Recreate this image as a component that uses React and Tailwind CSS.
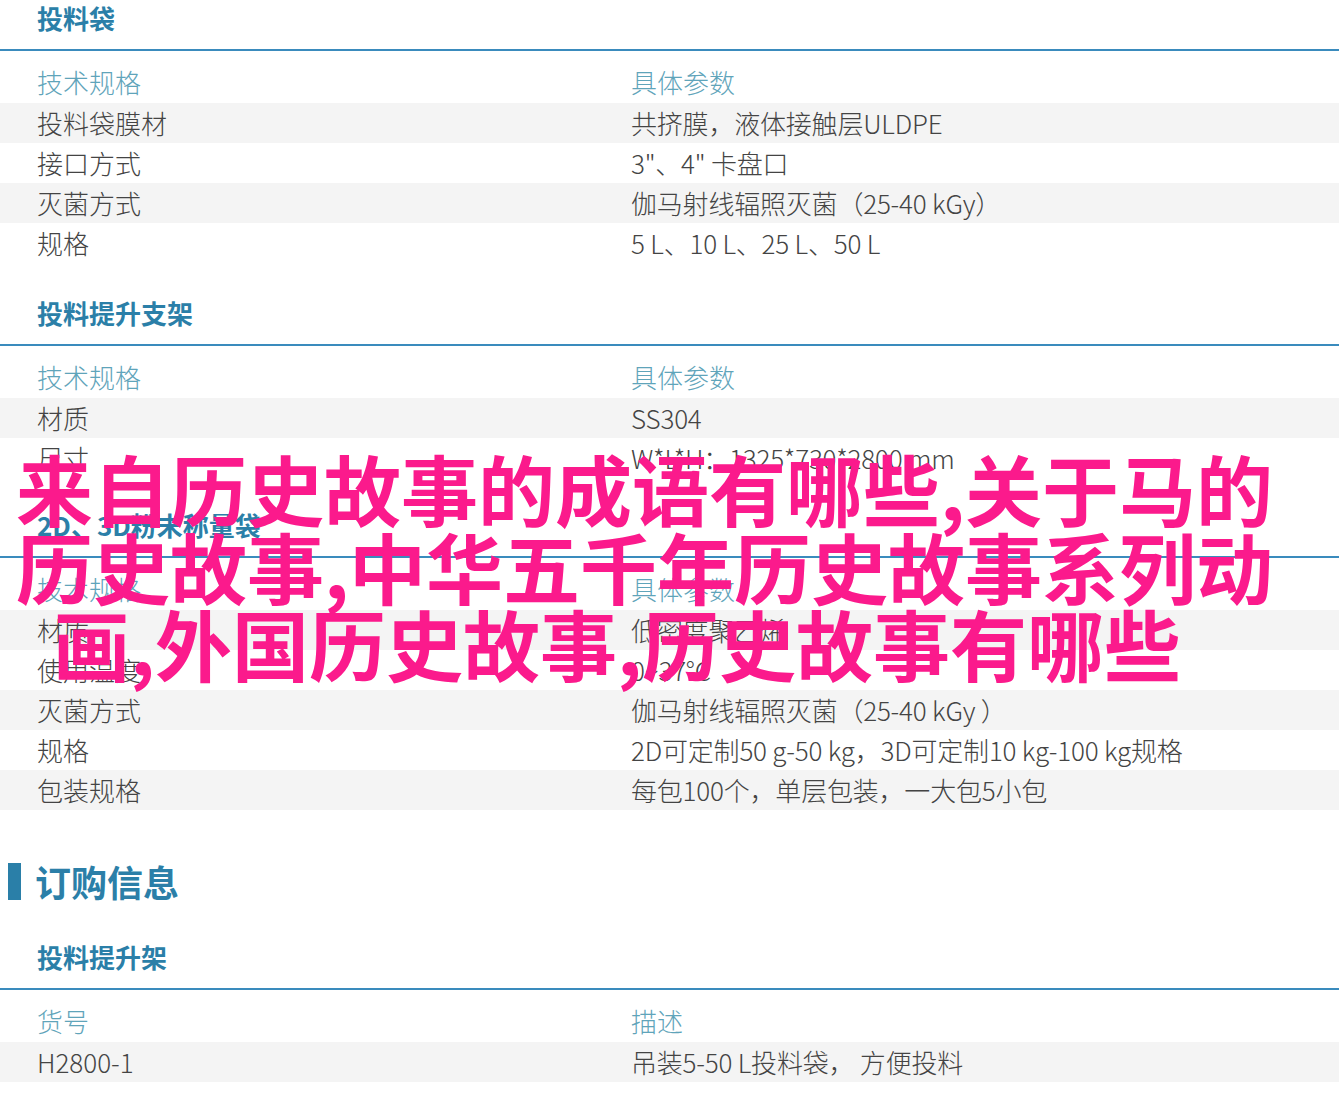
const sections = [
  {
    title: '投料袋',
    mt: 'mt-0',
    head: ['技术规格', '具体参数'],
    rows: [
      ['投料袋膜材', '共挤膜，液体接触层ULDPE'],
      ['接口方式', '3"、4" 卡盘口'],
      ['灭菌方式', '伽马射线辐照灭菌（25-40 kGy）'],
      ['规格', '5 L、10 L、25 L、50 L'],
    ],
  },
  {
    title: '投料提升支架',
    mt: 'mt-[32px]',
    head: ['技术规格', '具体参数'],
    rows: [
      ['材质', 'SS304'],
      ['尺寸', 'W*L*H：1325*730*2800 mm'],
    ],
  },
  {
    title: '2D、3D粉末称量袋',
    mt: 'mt-[29px]',
    head: ['技术规格', '具体参数'],
    rows: [
      ['材质', '低密度聚乙烯'],
      ['使用温度', '0~37°C'],
      ['灭菌方式', '伽马射线辐照灭菌（25-40 kGy ）'],
      ['规格', '2D可定制50 g-50 kg，3D可定制10 kg-100 kg规格'],
      ['包装规格', '每包100个，单层包装，一大包5小包'],
    ],
  },
];

const SpecTable = ({ title, head, rows, mt }) => (
  <div className={mt}>
    {/* section title + blue rule */}
    <div className="h-[51px] border-b-2 border-[#3a8bbd]">
      <h3 className="pl-[37px] h-[40px] leading-[36px] text-[26px] font-bold text-[#2b7fa8]">{title}</h3>
    </div>
    <div className="pt-[12px]">
      <div className="grid grid-cols-[631px_1fr] h-[40px] leading-[38px] text-[#5fa4ba] font-light">
        <div className="pl-[37px]">{head[0]}</div>
        <div>{head[1]}</div>
      </div>
      {rows.map((row, i) => (
        <div
          key={row[0] + i}
          className={`grid grid-cols-[631px_1fr] h-[40px] leading-[40px] text-[#444] font-light ${
            i % 2 === 0 ? 'bg-[#f4f4f4]' : 'bg-white'
          }`}
        >
          <div className="pl-[37px] whitespace-nowrap">{row[0]}</div>
          <div className="whitespace-nowrap tracking-[-0.2px]">{row[1]}</div>
        </div>
      ))}
    </div>
  </div>
);

export default function App() {
  return (
    <div
      className="relative w-[1339px] h-[1113px] bg-white overflow-hidden text-[26px]"
      style={{ fontFamily: '"Noto Sans CJK SC", "Noto Sans", sans-serif' }}
    >
      {sections.map((s) => (
        <SpecTable key={s.title} {...s} />
      ))}

      {/* ordering info */}
      <div className="pt-[53px] flex items-center h-[90px]">
        <div className="w-[13px] h-[37px] bg-[#2a7fa8] ml-[8px]"></div>
        <h2 className="ml-[14px] text-[36px] leading-[37px] font-bold text-[#2b7fa8]">订购信息</h2>
      </div>
      <div className="mt-[39px]">
        <SpecTable
          title="投料提升架"
          mt="mt-0"
          head={['货号', '描述']}
          rows={[['H2800-1', '吊装5-50 L投料袋， 方便投料']]}
        />
      </div>

      {/* overlay title */}
      <div className="absolute left-[16px] top-[449px] text-[77px] leading-[77.5px] font-bold text-[#fb1a8c] whitespace-nowrap">
        <div>来自历史故事的成语有哪些,关于马的</div>
        <div>历史故事,中华五千年历史故事系列动</div>
        <div className="pl-[37px]">画,外国历史故事,历史故事有哪些</div>
      </div>
    </div>
  );
}
